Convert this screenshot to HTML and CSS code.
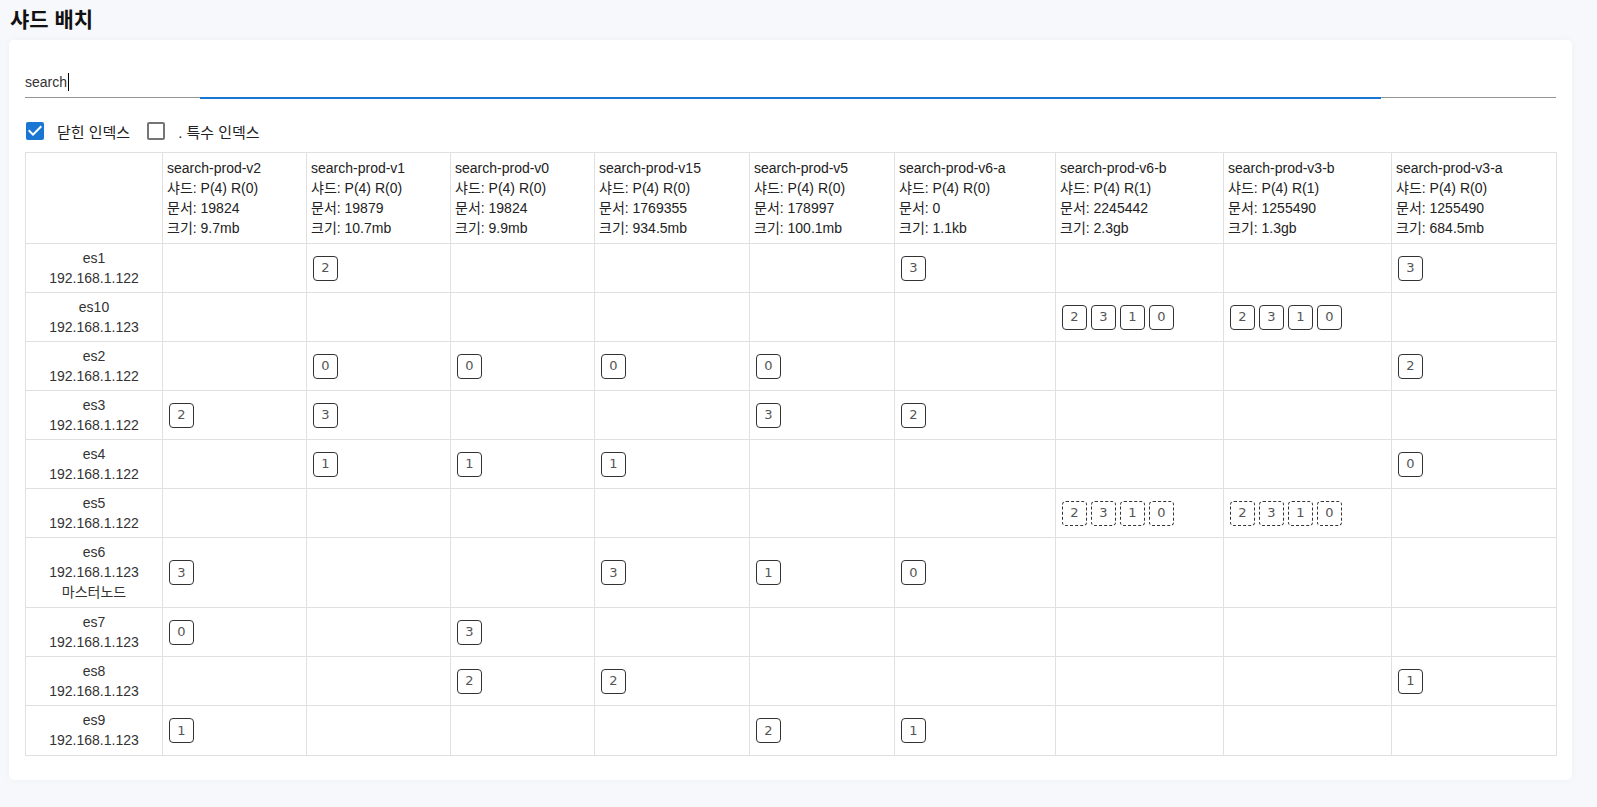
FILE: index.html
```html
<!DOCTYPE html>
<html lang="ko">
<head>
<meta charset="utf-8">
<title>샤드 배치</title>
<link rel="stylesheet" href="styles.css">
</head>
<body>
<div class="page">
  <h1 class="title">샤드 배치</h1>
  <div class="card">
    <div class="search">
      <span class="search-text">search</span><span class="caret"></span>
    </div>
    <div class="checks">
      <label class="check">
        <svg class="check-icon checked" viewBox="0 0 24 24"><path d="M19 3H5c-1.11 0-2 .9-2 2v14c0 1.1.89 2 2 2h14c1.11 0 2-.9 2-2V5c0-1.1-.89-2-2-2zm-9 14l-5-5 1.41-1.41L10 14.17l7.59-7.59L19 8l-9 9z"/></svg>
        <span class="check-label">닫힌 인덱스</span>
      </label>
      <label class="check">
        <svg class="check-icon" viewBox="0 0 24 24"><path d="M19 5v14H5V5h14m0-2H5c-1.1 0-2 .9-2 2v14c0 1.1.9 2 2 2h14c1.1 0 2-.9 2-2V5c0-1.1-.9-2-2-2z"/></svg>
        <span class="check-label">. 특수 인덱스</span>
      </label>
    </div>
    <table class="shards">
      <colgroup>
        <col class="w-node"><col class="w-144"><col class="w-144"><col class="w-144"><col class="w-155"><col class="w-145"><col class="w-161"><col class="w-168"><col class="w-168"><col class="w-165">
      </colgroup>
      <thead>
        <tr>
          <th></th>
          <th>search-prod-v2<br>샤드: P(4) R(0)<br>문서: 19824<br>크기: 9.7mb</th>
          <th>search-prod-v1<br>샤드: P(4) R(0)<br>문서: 19879<br>크기: 10.7mb</th>
          <th>search-prod-v0<br>샤드: P(4) R(0)<br>문서: 19824<br>크기: 9.9mb</th>
          <th>search-prod-v15<br>샤드: P(4) R(0)<br>문서: 1769355<br>크기: 934.5mb</th>
          <th>search-prod-v5<br>샤드: P(4) R(0)<br>문서: 178997<br>크기: 100.1mb</th>
          <th>search-prod-v6-a<br>샤드: P(4) R(0)<br>문서: 0<br>크기: 1.1kb</th>
          <th>search-prod-v6-b<br>샤드: P(4) R(1)<br>문서: 2245442<br>크기: 2.3gb</th>
          <th>search-prod-v3-b<br>샤드: P(4) R(1)<br>문서: 1255490<br>크기: 1.3gb</th>
          <th>search-prod-v3-a<br>샤드: P(4) R(0)<br>문서: 1255490<br>크기: 684.5mb</th>
        </tr>
      </thead>
      <tbody>
        <tr>
          <td class="node">es1<br>192.168.1.122</td>
          <td></td>
          <td><span class="shard">2</span></td>
          <td></td><td></td><td></td>
          <td><span class="shard">3</span></td>
          <td></td><td></td>
          <td><span class="shard">3</span></td>
        </tr>
        <tr>
          <td class="node">es10<br>192.168.1.123</td>
          <td></td><td></td><td></td><td></td><td></td><td></td>
          <td><span class="shard">2</span><span class="shard">3</span><span class="shard">1</span><span class="shard">0</span></td>
          <td><span class="shard">2</span><span class="shard">3</span><span class="shard">1</span><span class="shard">0</span></td>
          <td></td>
        </tr>
        <tr>
          <td class="node">es2<br>192.168.1.122</td>
          <td></td>
          <td><span class="shard">0</span></td>
          <td><span class="shard">0</span></td>
          <td><span class="shard">0</span></td>
          <td><span class="shard">0</span></td>
          <td></td><td></td><td></td>
          <td><span class="shard">2</span></td>
        </tr>
        <tr>
          <td class="node">es3<br>192.168.1.122</td>
          <td><span class="shard">2</span></td>
          <td><span class="shard">3</span></td>
          <td></td><td></td>
          <td><span class="shard">3</span></td>
          <td><span class="shard">2</span></td>
          <td></td><td></td><td></td>
        </tr>
        <tr>
          <td class="node">es4<br>192.168.1.122</td>
          <td></td>
          <td><span class="shard">1</span></td>
          <td><span class="shard">1</span></td>
          <td><span class="shard">1</span></td>
          <td></td><td></td><td></td><td></td>
          <td><span class="shard">0</span></td>
        </tr>
        <tr>
          <td class="node">es5<br>192.168.1.122</td>
          <td></td><td></td><td></td><td></td><td></td><td></td>
          <td><span class="shard dashed">2</span><span class="shard dashed">3</span><span class="shard dashed">1</span><span class="shard dashed">0</span></td>
          <td><span class="shard dashed">2</span><span class="shard dashed">3</span><span class="shard dashed">1</span><span class="shard dashed">0</span></td>
          <td></td>
        </tr>
        <tr>
          <td class="node master">es6<br>192.168.1.123<br>마스터노드</td>
          <td><span class="shard">3</span></td>
          <td></td><td></td>
          <td><span class="shard">3</span></td>
          <td><span class="shard">1</span></td>
          <td><span class="shard">0</span></td>
          <td></td><td></td><td></td>
        </tr>
        <tr>
          <td class="node">es7<br>192.168.1.123</td>
          <td><span class="shard">0</span></td>
          <td></td>
          <td><span class="shard">3</span></td>
          <td></td><td></td><td></td><td></td><td></td><td></td>
        </tr>
        <tr>
          <td class="node">es8<br>192.168.1.123</td>
          <td></td><td></td>
          <td><span class="shard">2</span></td>
          <td><span class="shard">2</span></td>
          <td></td><td></td><td></td><td></td>
          <td><span class="shard">1</span></td>
        </tr>
        <tr>
          <td class="node last">es9<br>192.168.1.123</td>
          <td><span class="shard">1</span></td>
          <td></td><td></td><td></td>
          <td><span class="shard">2</span></td>
          <td><span class="shard">1</span></td>
          <td></td><td></td><td></td>
        </tr>
      </tbody>
    </table>
  </div>
</div>
</body>
</html>
```
FILE: styles.css
```css
* { box-sizing: border-box; }
html, body {
  margin: 0;
  padding: 0;
  background: #f7f8fc;
}
body {
  font-family: "Liberation Sans", "Noto Sans CJK KR", Arial, sans-serif;
  color: #222;
  font-size: 14px;
}
.page {
  padding: 6px 25px 28px 9px;
}
.title {
  margin: 0 0 9px 1px;
  font-family: "Noto Sans CJK KR", sans-serif;
  font-size: 21px;
  font-weight: 700;
  line-height: 25px;
  color: #111;
}
.card {
  background: #fff;
  border-radius: 5px;
  box-shadow: 0 0 8px rgba(30, 40, 90, 0.035);
  padding: 16px 16px 24px 16px;
}
.search {
  position: relative;
  margin-top: 12px;
  padding: 4px 0 5px 0;
  line-height: 20px;
  font-size: 14px;
  color: #333;
  border-bottom: 1px solid #949494;
  display: flex;
  align-items: center;
}
.search::after {
  content: "";
  position: absolute;
  left: 175px;
  right: 175px;
  bottom: -2px;
  height: 2px;
  background: #1976d2;
}
.caret {
  display: inline-block;
  width: 1px;
  height: 18px;
  background: #000;
  margin-left: 1px;
}
.checks {
  display: flex;
  margin-top: 12px;
  height: 42px;
  align-items: center;
}
.check {
  display: inline-flex;
  align-items: center;
  margin-left: -11px;
  margin-right: 16px;
  cursor: pointer;
}
.check-icon {
  width: 24px;
  height: 24px;
  margin: 9px;
  fill: #757575;
}
.check-icon.checked { fill: #1976d2; }
.check-label {
  font-family: "Liberation Sans", "Noto Sans CJK KR", sans-serif;
  font-size: 15px;
  color: #222;
  padding-left: 1px;
}
.shards {
  width: 100%;
  border-collapse: collapse;
  table-layout: fixed;
}
.w-node { width: 137px; }
.w-144 { width: 144px; }
.w-145 { width: 145px; }
.w-155 { width: 155px; }
.w-161 { width: 161px; }
.w-165 { width: 165px; }
.w-168 { width: 168px; }
.shards th,
.shards td {
  border: 1px solid #e0e0e0;
  font-size: 14px;
  line-height: 20px;
  padding: 4px 4px;
  white-space: nowrap;
}
.shards th {
  font-weight: 400;
  text-align: left;
  vertical-align: top;
  padding-top: 5px;
  padding-bottom: 5px;
  color: #222;
}
.shards td {
  vertical-align: middle;
}
.shards td.node {
  text-align: center;
  color: #333;
}
.shards td.node.master {
  padding-bottom: 5px;
}
.shards td.node.last {
  padding-bottom: 5px;
}
.shard {
  display: inline-flex;
  align-items: center;
  justify-content: center;
  width: 25px;
  height: 25px;
  margin: 0 2px;
  border: 1px solid #333;
  border-radius: 4px;
  font-family: "DejaVu Sans", Verdana, sans-serif;
  font-size: 13px;
  color: #555;
  vertical-align: middle;
}
.shard.dashed { border-style: dashed; }
```
